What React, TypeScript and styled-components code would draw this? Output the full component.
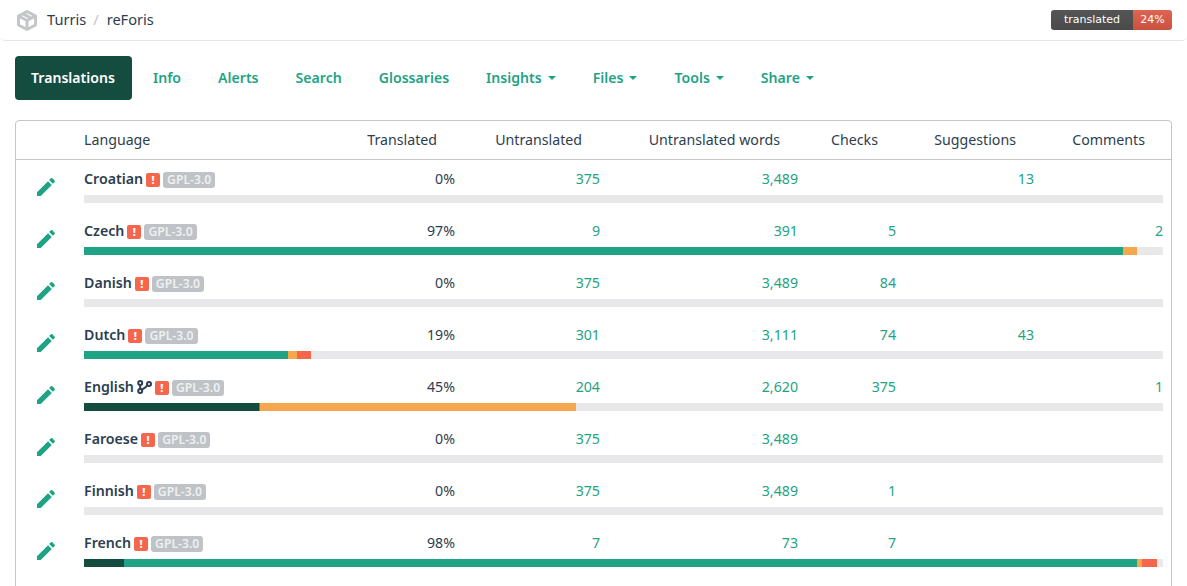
import React from 'react'
import styled, { createGlobalStyle } from 'styled-components'

const GREEN = '#1fa385'
const DARK = '#144d3f'
const ORANGE = '#f6a64c'
const RED = '#f6664c'
const COLUMNS = '68px 1fr 106px 145px 198px 98px 138px 129px'

const GlobalStyle = createGlobalStyle`
  html, body {
    margin: 0;
    padding: 0;
    height: 100%;
    overflow: hidden;
    background: #fff;
  }
  body {
    font-family: 'Noto Sans', 'Liberation Sans', sans-serif;
    font-size: 14.2px;
    color: #2c3e50;
  }
`

const Page = styled.div`
  height: 586px;
  overflow: hidden;
`

const TopBar = styled.header`
  height: 40px;
  border-bottom: 1px solid #e6e6e6;
  border-radius: 0 0 5px 5px;
  display: flex;
  align-items: center;
  padding: 0 15px 0 16px;
  font-size: 14.6px;
`

const Crumb = styled.span`
  color: #2c3e50;
  padding-bottom: 3px;
`

const CrumbSep = styled.span`
  color: #c0c4c8;
  margin: 0 8px 0 7px;
  padding-bottom: 3px;
`

const LogoWrap = styled.span`
  display: flex;
  margin-right: 9px;
`

const Badge = styled.div`
  margin-left: auto;
  display: flex;
  height: 20px;
  border-radius: 3px;
  overflow: hidden;
  font-family: 'DejaVu Sans', sans-serif;
  font-size: 11px;
  line-height: 20px;
  color: #fff;
`

const BadgeLabel = styled.span`
  width: 82px;
  text-align: center;
  background: linear-gradient(#555, #4a4a4a);
`

const BadgeValue = styled.span`
  width: 39px;
  text-align: center;
  background: linear-gradient(#dd6552, #c9513f);
`

const Nav = styled.nav`
  display: flex;
  align-items: center;
  padding: 15px 15px 0;
  height: 44px;
`

const NavItem = styled.a<{ $active?: boolean }>`
  display: flex;
  align-items: center;
  height: 42px;
  padding: 0 ${p => (p.$active ? 17 : 16)}px 2px 16px;
  margin-right: 5px;
  border-radius: 4px;
  font-weight: 600;
  font-size: 14.1px;
  color: ${p => (p.$active ? '#fff' : GREEN)};
  background: ${p => (p.$active ? DARK : 'transparent')};
`

const Caret = styled.span`
  display: inline-block;
  margin: 2px 0 0 6px;
  border-top: 4px solid ${GREEN};
  border-left: 4px solid transparent;
  border-right: 4px solid transparent;
`

const Table = styled.section`
  margin: 20px 15px 0;
  border: 1px solid #c4c6c8;
  border-radius: 4px;
  padding-bottom: 40px;
`

const HeadRow = styled.div`
  display: grid;
  grid-template-columns: ${COLUMNS};
  height: 36px;
  padding: 0 8px 2px 0;
  align-items: center;
  border-bottom: 1px solid #c4c6c8;
`

const HeadCell = styled.div<{ $left?: boolean }>`
  text-align: ${p => (p.$left ? 'left' : 'right')};
  padding-right: ${p => (p.$left ? 0 : 18)}px;
  white-space: nowrap;
`

const Row = styled.div`
  display: grid;
  grid-template-columns: ${COLUMNS};
  grid-template-rows: 24px 8px;
  row-gap: 4px;
  height: 52px;
  padding: 7px 8px 0 0;
  box-sizing: border-box;
  align-items: center;
`

const EditCell = styled.div`
  grid-row: 1 / 3;
  display: flex;
  justify-content: flex-end;
  padding: 4px 26px 0 0;
`

const NameCell = styled.div`
  display: flex;
  align-items: center;
  font-weight: 600;
  white-space: nowrap;
`

const NameText = styled.span`
  padding-bottom: 2px;
`

const BranchSvg = styled.svg`
  margin: 0 0 1px 3px;
`

const Alert = styled.span`
  width: 14px;
  height: 14px;
  margin: 2px 0 0 3px;
  border-radius: 2px;
  background: ${RED};
  color: #fff;
  font-size: 11px;
  font-weight: 800;
  line-height: 14px;
  text-align: center;
`

const License = styled.span`
  margin: 2px 0 0 3px;
  height: 16px;
  padding: 0 4px;
  border-radius: 3px;
  background: #bfc3c7;
  color: #eef0f1;
  font-size: 12.2px;
  font-weight: 600;
  line-height: 16px;
`

const Value = styled.div<{ $plain?: boolean }>`
  text-align: right;
  padding-bottom: 2px;
  color: ${p => (p.$plain ? '#2c3e50' : GREEN)};
`

const Bar = styled.div`
  grid-column: 2 / -1;
  display: flex;
  height: 8px;
  background: #e8e8ea;
`

const Segment = styled.div<{ $color: string }>`
  height: 100%;
  background: ${p => p.$color};
`

function PencilIcon() {
  return (
    <svg width="24" height="24" viewBox="0 0 24 24" fill={GREEN}>
      <path d="M20.71 7.04c.39-.39.39-1.04 0-1.41l-2.34-2.34c-.37-.39-1.02-.39-1.41 0l-1.84 1.83 3.75 3.75M3 17.25V21h3.75L17.81 9.93l-3.75-3.75L3 17.25z" />
    </svg>
  )
}

function BranchIcon() {
  return (
    <BranchSvg width="15" height="14" viewBox="0 0 15 14" fill="none" stroke="#2c3e50" strokeWidth="2">
      <circle cx="3.2" cy="3" r="2" />
      <circle cx="3.2" cy="11" r="2" />
      <circle cx="12" cy="4" r="2" />
      <path d="M3.2 5v4M10.2 5.2C9.4 7.4 7 8.4 4.8 9.6" />
    </BranchSvg>
  )
}

function BoxLogo() {
  return (
    <svg width="22" height="22" viewBox="0 0 22 22" fill="none" stroke="#c4c6c8" strokeWidth="3" strokeLinejoin="round">
      <path d="M11 2.5 19.5 7v9L11 20.5 2.5 16V7z" />
      <path d="M2.5 7 11 11.5 19.5 7M11 11.5v9M7 4.8l8.5 4.5" />
    </svg>
  )
}

type Seg = [number, string]
type Lang = {
  name: string
  pct: string
  untranslated: string
  words: string
  checks?: string
  suggestions?: string
  comments?: string
  branch?: boolean
  bar: Seg[]
}

// bar widths are pixels of the 1079px track
const languages: Lang[] = [
  { name: 'Croatian', pct: '0%', untranslated: '375', words: '3,489', suggestions: '13', bar: [] },
  { name: 'Czech', pct: '97%', untranslated: '9', words: '391', checks: '5', comments: '2', bar: [[1039, GREEN], [14, ORANGE]] },
  { name: 'Danish', pct: '0%', untranslated: '375', words: '3,489', checks: '84', bar: [] },
  { name: 'Dutch', pct: '19%', untranslated: '301', words: '3,111', checks: '74', suggestions: '43', bar: [[204, GREEN], [9, ORANGE], [14, RED]] },
  { name: 'English', pct: '45%', untranslated: '204', words: '2,620', checks: '375', comments: '1', branch: true, bar: [[175, DARK], [1, GREEN], [316, ORANGE]] },
  { name: 'Faroese', pct: '0%', untranslated: '375', words: '3,489', bar: [] },
  { name: 'Finnish', pct: '0%', untranslated: '375', words: '3,489', checks: '1', bar: [] },
  { name: 'French', pct: '98%', untranslated: '7', words: '73', checks: '7', bar: [[40, DARK], [1013, GREEN], [5, ORANGE], [15, RED]] }
]

const tabs = ['Info', 'Alerts', 'Search', 'Glossaries']
const menus = ['Insights', 'Files', 'Tools', 'Share']

export default function App() {
  return (
    <Page>
      <GlobalStyle />
      <TopBar>
        <LogoWrap>
          <BoxLogo />
        </LogoWrap>
        <Crumb>Turris</Crumb>
        <CrumbSep>/</CrumbSep>
        <Crumb>reForis</Crumb>
        <Badge>
          <BadgeLabel>translated</BadgeLabel>
          <BadgeValue>24%</BadgeValue>
        </Badge>
      </TopBar>
      <Nav>
        <NavItem $active>Translations</NavItem>
        {tabs.map(t => (
          <NavItem key={t}>{t}</NavItem>
        ))}
        {menus.map(t => (
          <NavItem key={t}>
            {t}
            <Caret />
          </NavItem>
        ))}
      </Nav>
      <Table>
        <HeadRow>
          <span />
          <HeadCell $left>Language</HeadCell>
          <HeadCell>Translated</HeadCell>
          <HeadCell>Untranslated</HeadCell>
          <HeadCell>Untranslated words</HeadCell>
          <HeadCell>Checks</HeadCell>
          <HeadCell>Suggestions</HeadCell>
          <HeadCell>Comments</HeadCell>
        </HeadRow>
        {languages.map(l => (
          <Row key={l.name}>
            <EditCell>
              <PencilIcon />
            </EditCell>
            <NameCell>
              <NameText>{l.name}</NameText>
              {l.branch && <BranchIcon />}
              <Alert>!</Alert>
              <License>GPL-3.0</License>
            </NameCell>
            <Value $plain>{l.pct}</Value>
            <Value>{l.untranslated}</Value>
            <Value>{l.words}</Value>
            <Value>{l.checks}</Value>
            <Value>{l.suggestions}</Value>
            <Value>{l.comments}</Value>
            <Bar>
              {l.bar.map(([w, c], i) => (
                <Segment key={i} $color={c} style={{ width: `${(w / 1079) * 100}%` }} />
              ))}
            </Bar>
          </Row>
        ))}
      </Table>
    </Page>
  )
}
